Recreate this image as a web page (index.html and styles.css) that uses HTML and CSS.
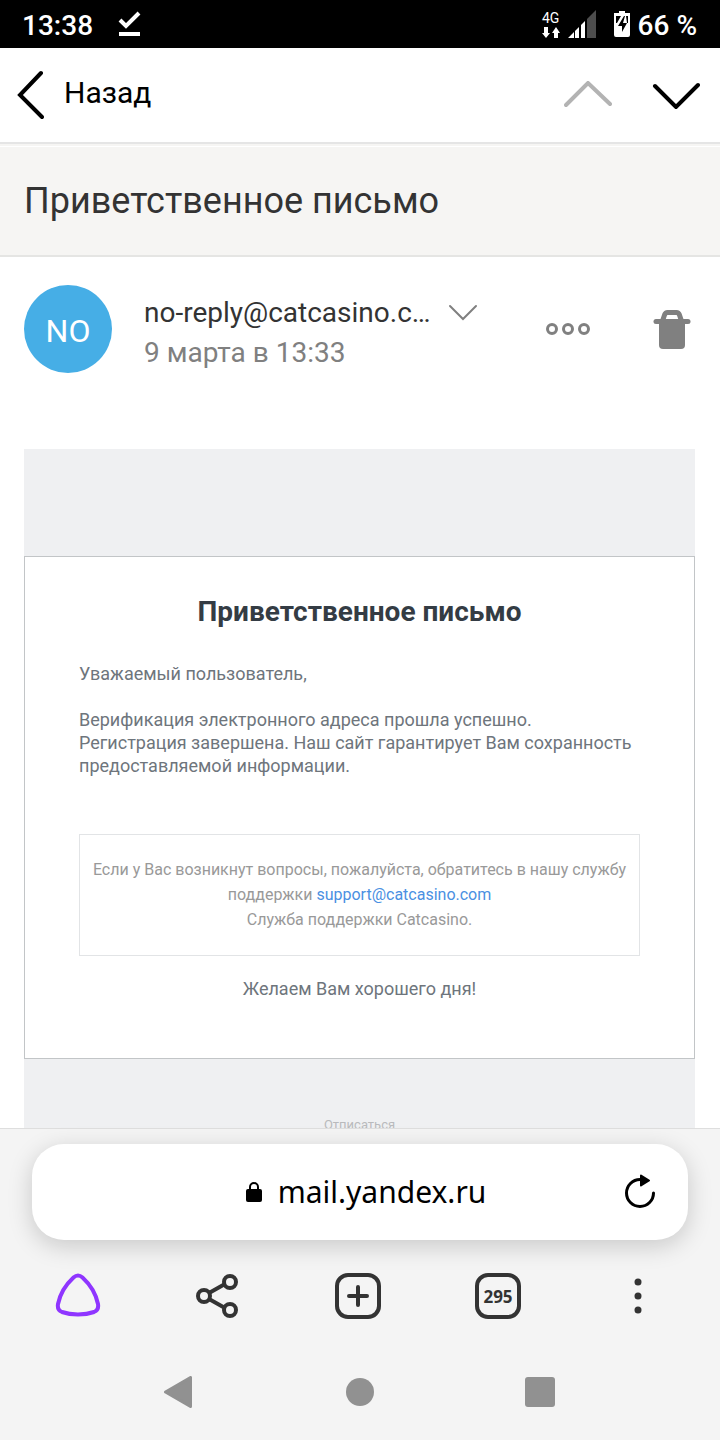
FILE: index.html
```html
<!DOCTYPE html>
<html lang="ru">
<head>
    <meta charset="UTF-8">
    <meta name="viewport" content="width=device-width, initial-scale=1.0">
    <title>Приветственное письмо</title>
    <link rel="stylesheet" href="styles.css">
</head>
<body>
    <div class="status-bar">
        <span class="clock">13:38</span>
        <svg class="status-check" width="24" height="28" viewBox="0 0 24 28">
            <path d="M2 10l6 6L21 3" fill="none" stroke="#fff" stroke-width="4"/>
            <path d="M1 22h21v4H1z" fill="#fff"/>
        </svg>
        <div class="status-right">
            <div class="network">
                <span>4G</span>
                <svg width="18" height="12" viewBox="0 0 18 12" fill="#fff">
                    <path d="M2 0h4v6h2l-4 5-4-5h2zM12 11h4V6h2l-4-6-4 6h2z"/>
                </svg>
            </div>
            <svg class="signal" width="28" height="28" viewBox="0 0 28 28">
                <path d="M19 28V9l9-9v28z" fill="#4d4d4d"/>
                <path d="M0 28l6-6v6zM7 28v-7l4-4v11zM13 28V15l4-4v17z" fill="#fff"/>
            </svg>
            <svg class="battery" width="16" height="26" viewBox="0 0 16 26">
                <path d="M5 0h6v2h5v22q0 2-2 2H2q-2 0-2-2V2h5z" fill="#fff"/>
                <path d="M2 5h5l-4 7H2zM12 5h2v7h-1zM10 5L4 15h4v6l5-9H9l2-7z" fill="#000"/>
            </svg>
            <span class="percent">66 %</span>
        </div>
    </div>

    <header class="mail-header">
        <button class="back-btn">
            <svg width="28" height="50" viewBox="0 0 28 50">
                <path d="M25 3L4 25l22 22" fill="none" stroke="#000" stroke-width="4" stroke-linecap="round"/>
            </svg>
            <span>Назад</span>
        </button>
        <div class="mail-nav">
            <button aria-label="Предыдущее" disabled>
                <svg width="48" height="28" viewBox="0 0 48 28">
                    <path d="M2 24L24 2l22 21" fill="none" stroke="#b3b3b3" stroke-width="4" stroke-linecap="round"/>
                </svg>
            </button>
            <button aria-label="Следующее">
                <svg width="48" height="28" viewBox="0 0 48 28">
                    <path d="M3 5l21 21L46 4" fill="none" stroke="#000" stroke-width="4" stroke-linecap="round"/>
                </svg>
            </button>
        </div>
    </header>

    <main class="mail">
        <h1 class="subject">Приветственное письмо</h1>

        <div class="sender">
            <div class="avatar">NO</div>
            <div class="sender-info">
                <button class="sender-name">
                    <span>no-reply@catcasino.com</span>
                    <svg width="30" height="18" viewBox="0 0 30 18">
                        <path d="M2 2l13 13L28 2" fill="none" stroke="#808080" stroke-width="2" stroke-linecap="round"/>
                    </svg>
                </button>
                <div class="sender-date">9 марта в 13:33</div>
            </div>
            <button class="more-btn" aria-label="Ещё">
                <svg width="44" height="12" viewBox="0 0 44 12" fill="none" stroke="#808080" stroke-width="3">
                    <circle cx="6" cy="6" r="4.5"/>
                    <circle cx="22" cy="6" r="4.5"/>
                    <circle cx="38" cy="6" r="4.5"/>
                </svg>
            </button>
            <button class="delete-btn" aria-label="Удалить">
                <svg width="38" height="42" viewBox="0 0 38 42">
                    <path d="M9.500 13l2-6q1-2.500 3-2.500h9q2 0 3 2.500l2 6" fill="none" stroke="#808080" stroke-width="5"/>
                    <rect x="0.500" y="11" width="37" height="5" rx="2.500" fill="#808080"/>
                    <path d="M6 13h26v24q0 4-4 4H10q-4 0-4-4z" fill="#808080"/>
                </svg>
            </button>
        </div>

        <article class="letter">
            <section class="card">
                <h2>Приветственное письмо</h2>
                <p>Уважаемый пользователь,</p>
                <p>Верификация электронного адреса прошла успешно.<br>
                Регистрация завершена. Наш сайт гарантирует Вам сохранность предоставляемой информации.</p>
                <div class="support">
                    Если у Вас возникнут вопросы, пожалуйста, обратитесь в нашу службу поддержки <a href="mailto:support@catcasino.com">support@catcasino.com</a><br>
                    Служба поддержки Catcasino.
                </div>
                <p class="wish">Желаем Вам хорошего дня!</p>
            </section>
            <a class="unsubscribe" href="#">Отписаться</a>
        </article>
    </main>

    <footer class="browser">
        <div class="address">
            <button class="site">
                <svg width="16" height="22" viewBox="0 0 16 22">
                    <path d="M4 9V6a4 4 0 0 1 8 0v3" fill="none" stroke="#000" stroke-width="2"/>
                    <rect y="8" width="16" height="13" rx="2" fill="#000"/>
                </svg>
                <span>mail.yandex.ru</span>
            </button>
            <button class="reload" aria-label="Обновить">
                <svg width="32" height="38" viewBox="0 0 32 38">
                    <path d="M16 6.500A13.500 13.500 0 1 0 29.500 20" fill="none" stroke="#000" stroke-width="3" stroke-linecap="round"/>
                    <path d="M17 2.500l8 5-8 5z" fill="#000" stroke="#000" stroke-width="2" stroke-linejoin="round"/>
                </svg>
            </button>
        </div>

        <nav class="toolbar">
            <button aria-label="Алиса">
                <svg width="48" height="48" viewBox="0 0 48 48">
                    <path d="M19.500 5.500Q24 1.500 28.500 5.500 41 17 44 32q1 6-4 8-7 2.500-16 2.500T8 40q-5-2-4-8Q7 17 19.500 5.500z" fill="none" stroke="#8f35ff" stroke-width="4"/>
                </svg>
            </button>
            <button aria-label="Поделиться">
                <svg width="48" height="48" viewBox="0 0 48 48" fill="none" stroke="#333" stroke-width="4">
                    <path d="M15 21l16-9M15 27l16 9"/>
                    <circle cx="10" cy="24" r="6"/>
                    <circle cx="36" cy="10" r="6"/>
                    <circle cx="36" cy="38" r="6"/>
                </svg>
            </button>
            <button aria-label="Новая вкладка">
                <svg width="48" height="48" viewBox="0 0 48 48" fill="none" stroke="#333" stroke-width="4">
                    <rect x="3" y="3" width="42" height="42" rx="11"/>
                    <path d="M24 15v18M15 24h18" stroke-linecap="round"/>
                </svg>
            </button>
            <button aria-label="Вкладки"><span class="tabs">295</span></button>
            <button aria-label="Меню">
                <svg width="48" height="48" viewBox="0 0 48 48" fill="#333">
                    <circle cx="24" cy="10" r="3.500"/>
                    <circle cx="24" cy="24" r="3.500"/>
                    <circle cx="24" cy="38" r="3.500"/>
                </svg>
            </button>
        </nav>

        <nav class="system-nav">
            <button aria-label="Назад">
                <svg width="32" height="32" viewBox="0 0 32 32">
                    <path d="M1.500 16L26.500 1.500v29z" fill="#919191" stroke="#919191" stroke-width="3" stroke-linejoin="round"/>
                </svg>
            </button>
            <button aria-label="Домой">
                <svg width="32" height="32" viewBox="0 0 32 32">
                    <circle cx="16" cy="16" r="14" fill="#919191"/>
                </svg>
            </button>
            <button aria-label="Недавние">
                <svg width="32" height="32" viewBox="0 0 32 32">
                    <rect x="1" y="1" width="30" height="30" rx="3" fill="#919191"/>
                </svg>
            </button>
        </nav>
    </footer>
</body>
</html>
```
FILE: styles.css
```css
* {
    margin: 0;
    padding: 0;
    box-sizing: border-box;
}

body {
    display: flex;
    flex-direction: column;
    height: 100vh;
    overflow: hidden;
    background: #fff;
    color: #333;
    font-family: Roboto, sans-serif;
}

button {
    display: flex;
    align-items: center;
    justify-content: center;
    background: none;
    border: none;
    color: inherit;
    font: inherit;
    cursor: pointer;
}

svg {
    display: block;
    flex-shrink: 0;
}

/* status bar */
.status-bar {
    display: flex;
    align-items: center;
    flex-shrink: 0;
    height: 48px;
    padding: 0 23px 0 22px;
    background: #000;
    color: #fff;
    font-size: 28px;
    font-weight: 500;
    line-height: 44px;
}

.clock,
.percent {
    padding-top: 4px;
}

.status-check {
    margin-left: 25px;
}

.status-right {
    display: flex;
    align-items: center;
    margin-left: auto;
}

.network {
    display: flex;
    flex-direction: column;
    align-items: center;
    font-size: 14px;
    font-weight: 400;
    line-height: 18px;
}

.signal {
    margin-left: 8px;
}

.battery {
    margin: 0 8px 0 18px;
}

/* mail header */
.mail-header {
    display: flex;
    align-items: center;
    justify-content: space-between;
    flex-shrink: 0;
    height: 96px;
    padding: 0 20px 0 16px;
    border-bottom: 2px solid #e5e5e5;
    color: #000;
}

.back-btn {
    gap: 20px;
    font-size: 30px;
    line-height: 40px;
}

.back-btn span {
    padding-bottom: 4px;
}

.mail-nav {
    display: flex;
    gap: 40px;
}

/* message */
.mail {
    flex: 1;
    min-height: 0;
    overflow: hidden;
    border-top: 2px solid #f6f5f3;
}

.subject {
    margin-top: 1px;
    padding: 30px 24px;
    background: #f6f5f3;
    border-bottom: 2px solid #e5e5e3;
    font-size: 36px;
    font-weight: 400;
    line-height: 48px;
}

.sender {
    display: flex;
    align-items: center;
    padding: 28px 29px 76px 24px;
}

.avatar {
    display: flex;
    align-items: center;
    justify-content: center;
    flex-shrink: 0;
    width: 88px;
    height: 88px;
    padding-top: 4px;
    border-radius: 50%;
    background: #46aee6;
    color: #fff;
    font-size: 32px;
}

.sender-info {
    flex: 1;
    min-width: 0;
    margin-left: 32px;
    padding-top: 7px;
    font-size: 28px;
    line-height: 40px;
}

.sender-name {
    gap: 16px;
    max-width: 100%;
}

.sender-name span {
    max-width: 288px;
    overflow: hidden;
    text-overflow: ellipsis;
    white-space: nowrap;
}

.sender-date {
    color: #808080;
}

.more-btn {
    margin-right: 63px;
}

.letter {
    margin: 0 25px 0 24px;
    padding: 107px 0 64px;
    background: #eff0f2;
    text-align: center;
}

.card {
    padding: 36px 54px 58px;
    border: 1px solid #c2c5c7;
    background: #fff;
    color: #6e757c;
    font-size: 18px;
    line-height: 23px;
    text-align: left;
}

.card h2 {
    margin-bottom: 32px;
    color: #343c44;
    font-size: 28px;
    font-weight: 700;
    line-height: 37px;
    text-align: center;
}

.card p {
    margin-bottom: 23px;
}

.support {
    margin: 57px 0 21px;
    padding: 22px 12px 23px;
    border: 1px solid #e2e4e6;
    color: #999;
    font-size: 16px;
    line-height: 25px;
    text-align: center;
}

.support a {
    color: #4a90e2;
    text-decoration: none;
}

.card .wish {
    margin-bottom: 0;
    text-align: center;
}

.unsubscribe {
    display: inline-block;
    margin-top: 56px;
    color: #b9babc;
    font-size: 13px;
    line-height: 20px;
    text-decoration: none;
}

/* browser panel */
.browser {
    flex-shrink: 0;
    padding-top: 15px;
    border-top: 1px solid #dedede;
    background: #f4f4f4;
}

.address {
    display: flex;
    align-items: center;
    height: 96px;
    margin: 0 32px 8px;
    padding: 0 32px;
    border-radius: 32px;
    background: #fff;
    box-shadow: 0 6px 24px rgba(0, 0, 0, 0.18);
    color: #000;
}

.site {
    flex: 1;
    gap: 16px;
    padding-left: 44px;
    font-family: "Noto Sans", sans-serif;
    font-size: 30px;
    line-height: 44px;
}

.toolbar {
    display: grid;
    grid-template-columns: repeat(5, 1fr);
    height: 96px;
    padding: 0 12px 0 8px;
}

.tabs {
    width: 46px;
    height: 46px;
    border: 4px solid #333;
    border-radius: 13px;
    color: #333;
    font-family: "Noto Sans", sans-serif;
    font-size: 17px;
    font-weight: 700;
    line-height: 39px;
    text-align: center;
}

.system-nav {
    display: grid;
    grid-template-columns: repeat(3, 1fr);
    height: 96px;
    padding: 0 90px;
}
```
